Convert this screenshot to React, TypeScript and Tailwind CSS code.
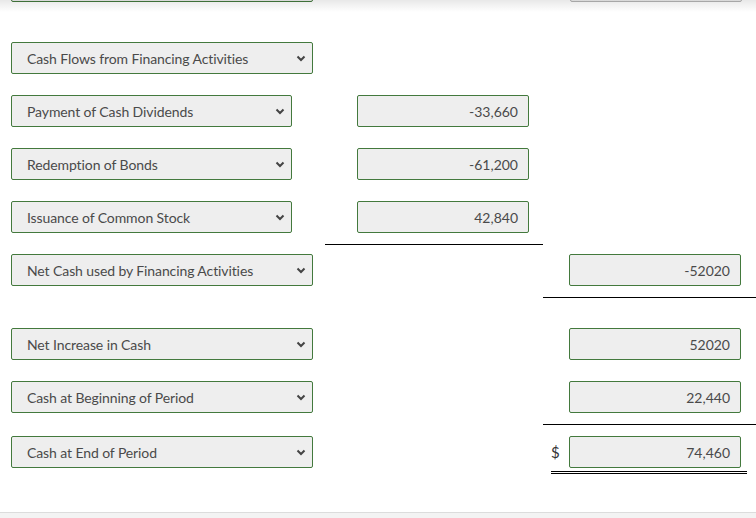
import React from 'react';

const font = { fontFamily: 'Lato, "Open Sans", sans-serif' };

function Chevron() {
  return (
    <svg width="10" height="7" viewBox="0 0 10 7" className="shrink-0">
      <path d="M1.5 1.5 L5 5 L8.5 1.5" fill="none" stroke="#444" strokeWidth="2" />
    </svg>
  );
}

function Select({ label, wide = true }: { label: string; wide?: boolean }) {
  return (
    <div
      className={`ml-[11px] flex h-[32px] items-center justify-between rounded-[2px] border border-[#43793d] bg-[#eeeeee] pl-[15px] pr-[6px] text-[14px] text-[#4a4a4a] ${
        wide ? 'w-[302px]' : 'w-[281px]'
      }`}
    >
      <span className="tracking-[-0.1px]">{label}</span>
      <Chevron />
    </div>
  );
}

function Amount({ value }: { value: string }) {
  return (
    <div className="flex h-[32px] w-[172px] items-center justify-end rounded-[2px] border border-[#43793d] bg-[#eeeeee] pr-[10px] text-[14px] text-[#4a4a4a]">
      {value}
    </div>
  );
}

function Row({
  label,
  wide,
  mid,
  right,
  dollar,
  className = '',
}: {
  label: string;
  wide?: boolean;
  mid?: string;
  right?: string;
  dollar?: boolean;
  className?: string;
}) {
  return (
    <div className={`flex h-[32px] ${className}`}>
      <div className="w-[325px]">
        <Select label={label} wide={wide} />
      </div>
      <div className="w-[218px] pl-[32px]">{mid && <Amount value={mid} />}</div>
      <div className="flex w-[213px] items-center">
        <span className="w-[26px] pl-[8px] text-[15px] text-[#333]">{dollar ? '$' : ''}</span>
        {right && <Amount value={right} />}
      </div>
    </div>
  );
}

export default function App() {
  return (
    <div className="relative flex h-[518px] w-[756px] flex-col overflow-hidden bg-white" style={font}>
      {/* cut-off row from above */}
      <div className="-mt-[30px] flex h-[32px]">
        <div className="ml-[11px] h-[32px] w-[302px] rounded-[2px] border border-[#43793d] bg-[#eeeeee]" />
        <div className="ml-[257px] h-[32px] w-[172px] rounded-[2px] border border-[#b5b5b5] bg-[#eeeeee]" />
      </div>
      <div className="pointer-events-none absolute left-0 right-0 top-0 h-[12px] bg-gradient-to-b from-[rgba(0,0,0,0.09)] to-transparent" />

      <Row className="mt-[40px]" label="Cash Flows from Financing Activities" wide />
      <Row className="mt-[21px]" label="Payment of Cash Dividends" wide={false} mid="-33,660" />
      <Row className="mt-[21px]" label="Redemption of Bonds" wide={false} mid="-61,200" />
      <Row className="mt-[21px]" label="Issuance of Common Stock" wide={false} mid="42,840" />
      <div className="mt-[11px] ml-[325px] h-[1px] w-[218px] bg-black" />

      <Row className="mt-[9px]" label="Net Cash used by Financing Activities" wide right="-52020" />
      <div className="mt-[11px] ml-[543px] h-[1px] w-[213px] bg-black" />

      <Row className="mt-[30px]" label="Net Increase in Cash" wide right="52020" />
      <Row className="mt-[21px]" label="Cash at Beginning of Period" wide right="22,440" />
      <div className="mt-[11px] ml-[543px] h-[1px] w-[213px] bg-black" />

      <Row className="mt-[11px]" label="Cash at End of Period" wide right="74,460" dollar />
      <div className="mt-[3px] ml-[551px] h-[1px] w-[196px] bg-black" />
      <div className="mt-[1px] ml-[551px] h-[1px] w-[196px] bg-black" />

      <div className="mt-auto h-[6px] border-t border-[#dcdcdc] bg-[#f3f3f3]" />
    </div>
  );
}
